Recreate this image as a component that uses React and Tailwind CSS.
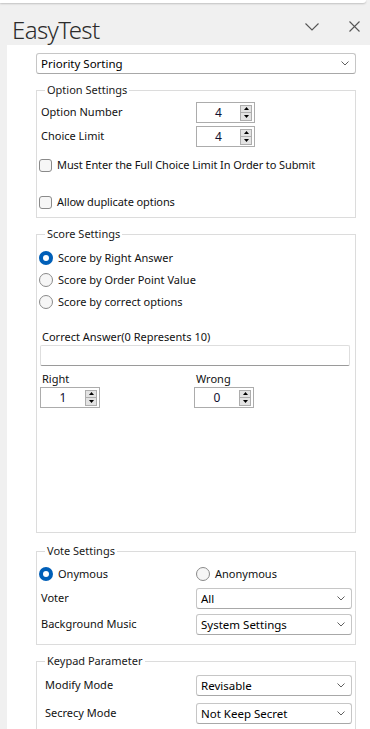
import React, { useState } from 'react'

const Chevron = ({ className = '' }) => (
  <svg width="8" height="5" viewBox="0 0 8 5" className={className}>
    <path d="M0.5 0.5 L4 4 L7.5 0.5" fill="none" stroke="#606060" strokeWidth="1" />
  </svg>
)

const Select = ({ value, className = '' }) => (
  <div
    className={`h-[21px] flex items-center justify-between pl-[4px] pr-[6px] bg-white border border-[#c6c6c6] border-b-[#a8a8a8] rounded-[3px] text-[11.5px] text-black ${className}`}
  >
    <span>{value}</span>
    <Chevron />
  </div>
)

const Spin = ({ value, className = '' }) => (
  <div className={`h-[21px] flex items-stretch border border-[#acacac] bg-white ${className}`}>
    <div className="flex-1 flex items-center justify-center text-[12px] text-[#101030]">{value}</div>
    <div className="w-[14px] flex flex-col justify-center py-[1px] pr-[2px]">
      <div className="h-[8px] bg-[#e3e3e3] border border-[#adadad] flex items-center justify-center">
        <svg width="5" height="3" viewBox="0 0 5 3"><path d="M0 3 L2.5 0 L5 3 Z" fill="#000" /></svg>
      </div>
      <div className="h-[8px] bg-[#e3e3e3] border border-[#adadad] border-t-0 flex items-center justify-center">
        <svg width="5" height="3" viewBox="0 0 5 3"><path d="M0 0 L2.5 3 L5 0 Z" fill="#000" /></svg>
      </div>
    </div>
  </div>
)

const Check = ({ label }) => (
  <div className="h-[18px] flex items-center gap-[5px]">
    <div className="w-[13px] h-[13px] rounded-[3px] border border-[#8a8a8a] bg-[#f6f6f6]" />
    <span className="tracking-[-0.1px]">{label}</span>
  </div>
)

const Radio = ({ label, checked, onClick }) => (
  <button onClick={onClick} className="h-[22px] flex items-center gap-[5px] text-left">
    {checked ? (
      <div className="w-[14px] h-[14px] rounded-full bg-[#005fb8] flex items-center justify-center">
        <div className="w-[6px] h-[6px] rounded-full bg-white" />
      </div>
    ) : (
      <div className="w-[14px] h-[14px] rounded-full border border-[#8a8a8a] bg-[#f6f6f6]" />
    )}
    <span>{label}</span>
  </button>
)

const Group = ({ title, className = '', children }) => (
  <fieldset className={`border border-[#dcdcdc] ${className}`}>
    <legend className="ml-[6px] px-[2px] leading-[14px] text-[11px] text-[#1a1a1a]">{title}</legend>
    {children}
  </fieldset>
)

const App = () => {
  const [score, setScore] = useState('right')
  const [vote, setVote] = useState('onymous')

  return (
    <div
      className="w-[370px] h-[729px] bg-[#f0f0f0] overflow-hidden flex flex-col text-[11px] text-[#111]"
      style={{ fontFamily: '"Noto Sans", "Open Sans", sans-serif' }}
    >
      {/* top strip */}
      <div className="h-[3px] shrink-0 mr-[4px] bg-white rounded-br-[5px] shadow-[0_1px_2px_rgba(0,0,0,0.2)]" />

      {/* Header */}
      <div className="h-[42px] shrink-0 flex items-start">
        <div className="pl-[12px] pt-[15px] text-[24px] leading-[24px] font-light text-[#2b2b2b] tracking-[-0.6px]">EasyTest</div>
        <div className="ml-auto flex items-center gap-[30px] pt-[18px] pr-[10px]">
          <svg width="14" height="8" viewBox="0 0 14 8">
            <path d="M0.5 0.5 L7 7 L13.5 0.5" fill="none" stroke="#555" strokeWidth="1.1" />
          </svg>
          <svg width="11" height="11" viewBox="0 0 11 11">
            <path d="M0.5 0.5 L10.5 10.5 M10.5 0.5 L0.5 10.5" fill="none" stroke="#555" strokeWidth="1.1" />
          </svg>
        </div>
      </div>

      {/* Panel */}
      <div className="flex-1 min-h-0 ml-[7px] bg-white pl-[29px] pr-[14px] pt-[8px] overflow-hidden">
        <Select value="Priority Sorting" />

        <Group title="Option Settings" className="mt-[9px] pl-[2px] pt-[5px] pb-[6px]">
          <div className="flex items-center h-[21px]">
            <span className="w-[157px] pl-[2px]">Option Number</span>
            <Spin value="4" className="w-[59px]" />
          </div>
          <div className="flex items-center h-[21px] mt-[3px]">
            <span className="w-[157px] pl-[2px]">Choice Limit</span>
            <Spin value="4" className="w-[59px]" />
          </div>
          <div className="mt-[9px]">
            <Check label="Must Enter the Full Choice Limit In Order to Submit" />
          </div>
          <div className="mt-[19px]">
            <Check label="Allow duplicate options" />
          </div>
        </Group>

        <Group title="Score Settings" className="mt-[9px] h-[306px] pl-[2px] pt-[6px]">
          <div className="flex flex-col items-start">
            <Radio label="Score by Right Answer" checked={score === 'right'} onClick={() => setScore('right')} />
            <Radio label="Score by Order Point Value" checked={score === 'order'} onClick={() => setScore('order')} />
            <Radio label="Score by correct options" checked={score === 'correct'} onClick={() => setScore('correct')} />
          </div>
          <div className="mt-[16px] pl-[3px] leading-[16px]">Correct Answer(0 Represents 10)</div>
          <div className="ml-[1px] w-[310px] h-[21px] border border-[#dedede] border-b-[#9a9a9a] rounded-[2px]" />
          <div className="flex mt-[5px]">
            <div className="w-[155px] pl-[1px]">
              <div className="pl-[2px] leading-[16px]">Right</div>
              <Spin value="1" className="w-[60px]" />
            </div>
            <div>
              <div className="pl-[2px] leading-[16px]">Wrong</div>
              <Spin value="0" className="w-[60px]" />
            </div>
          </div>
        </Group>

        <Group title="Vote Settings" className="mt-[11px] pl-[2px] pr-[3px] pt-[6px] pb-[9px]">
          <div className="flex h-[20px] items-center">
            <div className="w-[157px]">
              <Radio label="Onymous" checked={vote === 'onymous'} onClick={() => setVote('onymous')} />
            </div>
            <Radio label="Anonymous" checked={vote === 'anonymous'} onClick={() => setVote('anonymous')} />
          </div>
          <div className="flex items-center mt-[4px]">
            <span className="w-[157px] pl-[2px]">Voter</span>
            <Select value="All" className="flex-1" />
          </div>
          <div className="flex items-center mt-[5px]">
            <span className="w-[157px] pl-[2px]">Background Music</span>
            <Select value="System Settings" className="flex-1" />
          </div>
        </Group>

        <Group title="Keypad Parameter" className="mt-[9px] pl-[2px] pr-[3px] pt-[7px] pb-[9px]">
          <div className="flex items-center">
            <span className="w-[157px] pl-[6px]">Modify Mode</span>
            <Select value="Revisable" className="flex-1" />
          </div>
          <div className="flex items-center mt-[7px]">
            <span className="w-[157px] pl-[6px]">Secrecy Mode</span>
            <Select value="Not Keep Secret" className="flex-1" />
          </div>
        </Group>
      </div>
    </div>
  )
}

export default App
